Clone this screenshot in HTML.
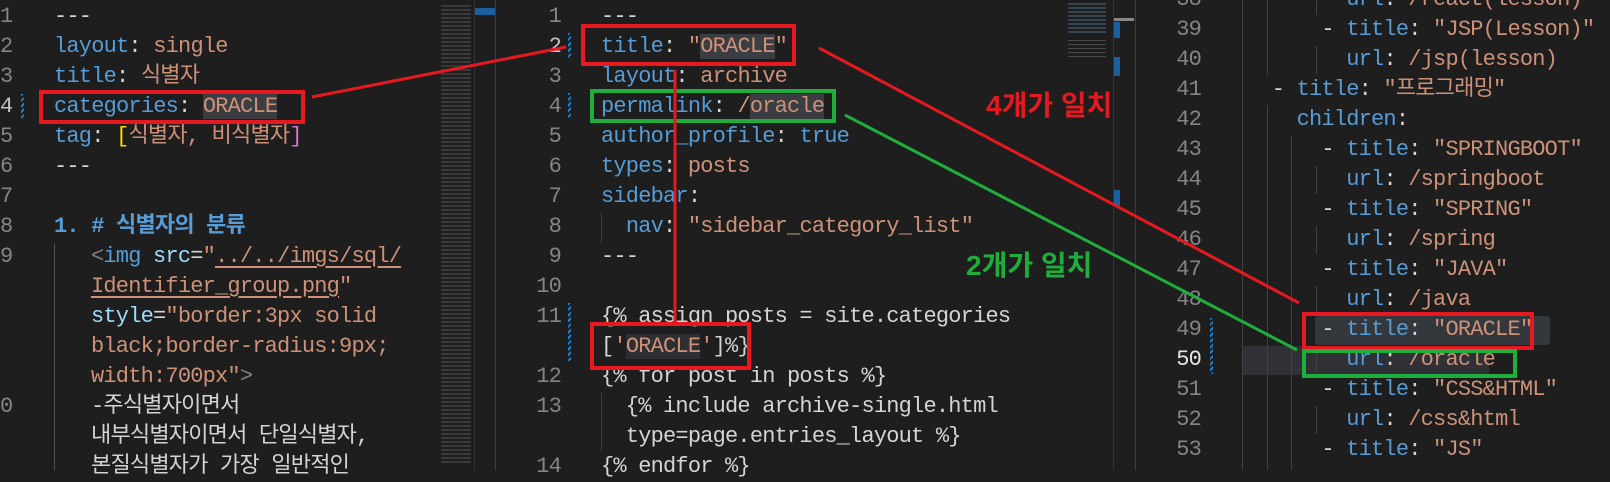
<!DOCTYPE html><html><head><meta charset="utf-8"><style>
body{margin:0;width:1610px;height:470px;background:#1e1e1e;overflow:hidden;position:relative;font-family:"Liberation Mono","Noto Sans CJK KR",monospace;font-size:22px;letter-spacing:-0.8px}
.l{position:absolute;white-space:pre;line-height:30px;color:#d4d4d4}
.n{position:absolute;white-space:pre;line-height:30px;color:#858585;text-align:right}
.k{color:#569cd6}.s{color:#ce9178}.u{text-decoration:underline;text-underline-offset:4px}
.box{position:absolute;border:4px solid #e5191f;box-sizing:border-box}
.g{border-color:#1fae3c}
.ig{position:absolute;width:1px;background:#404040}
</style></head><body>
<!-- panel 1 -->
<div class="n" style="left:0;top:2px;text-align:left">1
2
3
<span style="color:#c6c6c6">4</span>
5
6
7
8
9




0</div>
<div style="position:absolute;left:21px;top:94px;width:3px;height:26px;background:repeating-linear-gradient(135deg,#1b80d2 0 2px,#1e1e1e 2px 4px)"></div>
<div class="l" style="left:54px;top:2px">---
<span class="k">layout</span>: <span class="s">single</span>
<span class="k">title</span>: <span class="s">식별자</span>
<span class="k">categories</span>: <span class="s" style="background:#3a3d41">ORACLE</span>
<span class="k">tag</span>: <span style="color:#ffd700">[</span><span class="s">식별자, 비식별자</span><span style="color:#da70d6">]</span>
---

<span class="k" style="font-weight:bold">1. # 식별자의 분류</span></div>
<div class="ig" style="left:54px;top:244px;height:226px;background:#505050"></div>
<div class="l" style="left:91px;top:242px"><span style="color:#808080">&lt;</span><span class="k">img</span> <span style="color:#9cdcfe">src</span>=<span class="s">"<span class="u">../../imgs/sql/</span></span>
<span class="s"><span class="u">Identifier_group.png</span>"</span>
<span style="color:#9cdcfe">style</span>=<span class="s">"border:3px solid</span>
<span class="s">black;border-radius:9px;</span>
<span class="s">width:700px"</span><span style="color:#808080">&gt;</span>
-주식별자이면서
내부식별자이면서 단일식별자,
본질식별자가 가장 일반적인</div>
<div style="position:absolute;left:441px;top:5px;width:30px;height:460px;background:repeating-linear-gradient(180deg,#5a5a5a 0 2px,#1e1e1e 2px 4px);opacity:.45"></div>
<div style="position:absolute;left:474px;top:0;width:1px;height:470px;background:#333"></div>
<div style="position:absolute;left:475px;top:8px;width:20px;height:7px;background:#1b5f9e"></div>
<div style="position:absolute;left:495px;top:0;width:1px;height:470px;background:#3c3c3c"></div>
<!-- panel 2 -->
<div class="n" style="left:515px;top:2px;width:46px">1
<span style="color:#c6c6c6">2</span>
3
4
5
6
7
8
9
10
11

12
13

14</div>
<div style="position:absolute;left:568px;top:33px;width:3px;height:26px;background:repeating-linear-gradient(135deg,#1b80d2 0 2px,#1e1e1e 2px 4px)"></div>
<div style="position:absolute;left:568px;top:93px;width:3px;height:26px;background:repeating-linear-gradient(135deg,#1b80d2 0 2px,#1e1e1e 2px 4px)"></div>
<div style="position:absolute;left:568px;top:303px;width:3px;height:58px;background:repeating-linear-gradient(135deg,#1b80d2 0 2px,#1e1e1e 2px 4px)"></div>
<div class="ig" style="left:601px;top:213px;height:30px"></div>
<div class="ig" style="left:601px;top:393px;height:58px"></div>
<div class="l" style="left:601px;top:2px">---
<span class="k">title</span>: <span class="s">"<span style="background:#3a3d41">ORACLE</span>"</span>
<span class="k">layout</span>: <span class="s">archive</span>
<span class="k">permalink</span>: <span class="s">/<span style="background:#3a3d41">oracle</span></span>
<span class="k">author_profile</span>: <span class="k">true</span>
<span class="k">types</span>: <span class="s">posts</span>
<span class="k">sidebar</span>:
  <span class="k">nav</span>: <span class="s">"sidebar_category_list"</span>
---

{% assign posts = site.categories
[<span class="s">'<span style="background:#2d2f33">ORACLE</span>'</span>]%}
{% for post in posts %}
  {% include archive-single.html
  type=page.entries_layout %}
{% endfor %}</div>
<div style="position:absolute;left:1068px;top:3px;width:38px;height:30px;background:repeating-linear-gradient(180deg,#4a6a8a 0 2px,#1e1e1e 2px 4px);opacity:.5"></div>
<div style="position:absolute;left:1068px;top:40px;width:38px;height:18px;background:repeating-linear-gradient(180deg,#777 0 1px,#1e1e1e 1px 4px);opacity:.5"></div>
<div style="position:absolute;left:1113px;top:0;width:1px;height:470px;background:#333"></div>
<div style="position:absolute;left:1114px;top:18px;width:20px;height:3px;background:#888"></div>
<div style="position:absolute;left:1114px;top:22px;width:6px;height:16px;background:#1b5f9e"></div>
<div style="position:absolute;left:1114px;top:57px;width:6px;height:19px;background:#1b5f9e"></div>
<div style="position:absolute;left:1114px;top:190px;width:6px;height:16px;background:#1b5f9e"></div>
<div style="position:absolute;left:1135px;top:0;width:1px;height:470px;background:#3c3c3c"></div>
<!-- panel 3 -->
<div style="position:absolute;left:1242px;top:346px;width:247px;height:29px;background:#2f3136"></div>
<div style="position:absolute;left:1315px;top:316px;width:235px;height:29px;background:#34373c;border-radius:3px"></div>
<div class="n" style="left:1150px;top:-15px;width:51px">38
39
40
41
42
43
44
45
46
47
48
49
<span style="color:#e6e6e6">50</span>
51
52
53</div>
<div style="position:absolute;left:1210px;top:318px;width:3px;height:56px;background:repeating-linear-gradient(135deg,#1b80d2 0 2px,#1e1e1e 2px 4px)"></div>
<div class="ig" style="left:1242px;top:0;height:470px"></div>
<div class="ig" style="left:1267px;top:0;height:75px"></div>
<div class="ig" style="left:1267px;top:105px;height:365px"></div>
<div class="ig" style="left:1316px;top:0;height:15px"></div>
<div class="ig" style="left:1316px;top:46px;height:28px"></div>
<div class="ig" style="left:1291px;top:136px;height:334px"></div>
<div class="ig" style="left:1316px;top:166px;height:28px"></div>
<div class="ig" style="left:1316px;top:226px;height:28px"></div>
<div class="ig" style="left:1316px;top:286px;height:28px"></div>
<div class="ig" style="left:1316px;top:346px;height:28px"></div>
<div class="ig" style="left:1316px;top:406px;height:28px"></div>
<div class="l" style="left:1247px;top:-15px">        <span class="k">url</span>: <span class="s">/react(lesson)</span>
      - <span class="k">title</span>: <span class="s">"JSP(Lesson)"</span>
        <span class="k">url</span>: <span class="s">/jsp(lesson)</span>
  - <span class="k">title</span>: <span class="s">"프로그래밍"</span>
    <span class="k">children</span>:
      - <span class="k">title</span>: <span class="s">"SPRINGBOOT"</span>
        <span class="k">url</span>: <span class="s">/springboot</span>
      - <span class="k">title</span>: <span class="s">"SPRING"</span>
        <span class="k">url</span>: <span class="s">/spring</span>
      - <span class="k">title</span>: <span class="s">"JAVA"</span>
        <span class="k">url</span>: <span class="s">/java</span>
      - <span class="k">title</span>: <span class="s">"ORACLE"</span>
        <span class="k">url</span>: <span class="s">/oracle</span>
      - <span class="k">title</span>: <span class="s">"CSS&amp;HTML"</span>
        <span class="k">url</span>: <span class="s">/css&amp;html</span>
      - <span class="k">title</span>: <span class="s">"JS"</span></div>
<!-- annotations -->
<div class="box" style="left:39px;top:90px;width:266px;height:34px"></div>
<div class="box" style="left:581px;top:24px;width:215px;height:42px"></div>
<div class="box g" style="left:590px;top:89px;width:246px;height:34px"></div>
<div class="box" style="left:590px;top:322px;width:161px;height:48px"></div>
<div class="box" style="left:1302px;top:312px;width:232px;height:38px"></div>
<div class="box g" style="left:1302px;top:349px;width:215px;height:29px"></div>
<svg style="position:absolute;left:0;top:0" width="1610" height="470">
<line x1="312" y1="97" x2="566" y2="47" stroke="#e5191f" stroke-width="3"/>
<line x1="675" y1="70" x2="675" y2="322" stroke="#e5191f" stroke-width="3"/>
<line x1="819" y1="48" x2="1299" y2="303" stroke="#e5191f" stroke-width="3"/>
<line x1="845" y1="115" x2="1297" y2="350" stroke="#1fae3c" stroke-width="3"/>
</svg>
<div style="position:absolute;left:986px;top:84px;font-family:'Liberation Sans','Noto Sans CJK KR',sans-serif;letter-spacing:0;font-weight:bold;font-size:28px;color:#e5191f">4개가 일치</div>
<div style="position:absolute;left:966px;top:244px;font-family:'Liberation Sans','Noto Sans CJK KR',sans-serif;letter-spacing:0;font-weight:bold;font-size:28px;color:#1fae3c">2개가 일치</div>
</body></html>
